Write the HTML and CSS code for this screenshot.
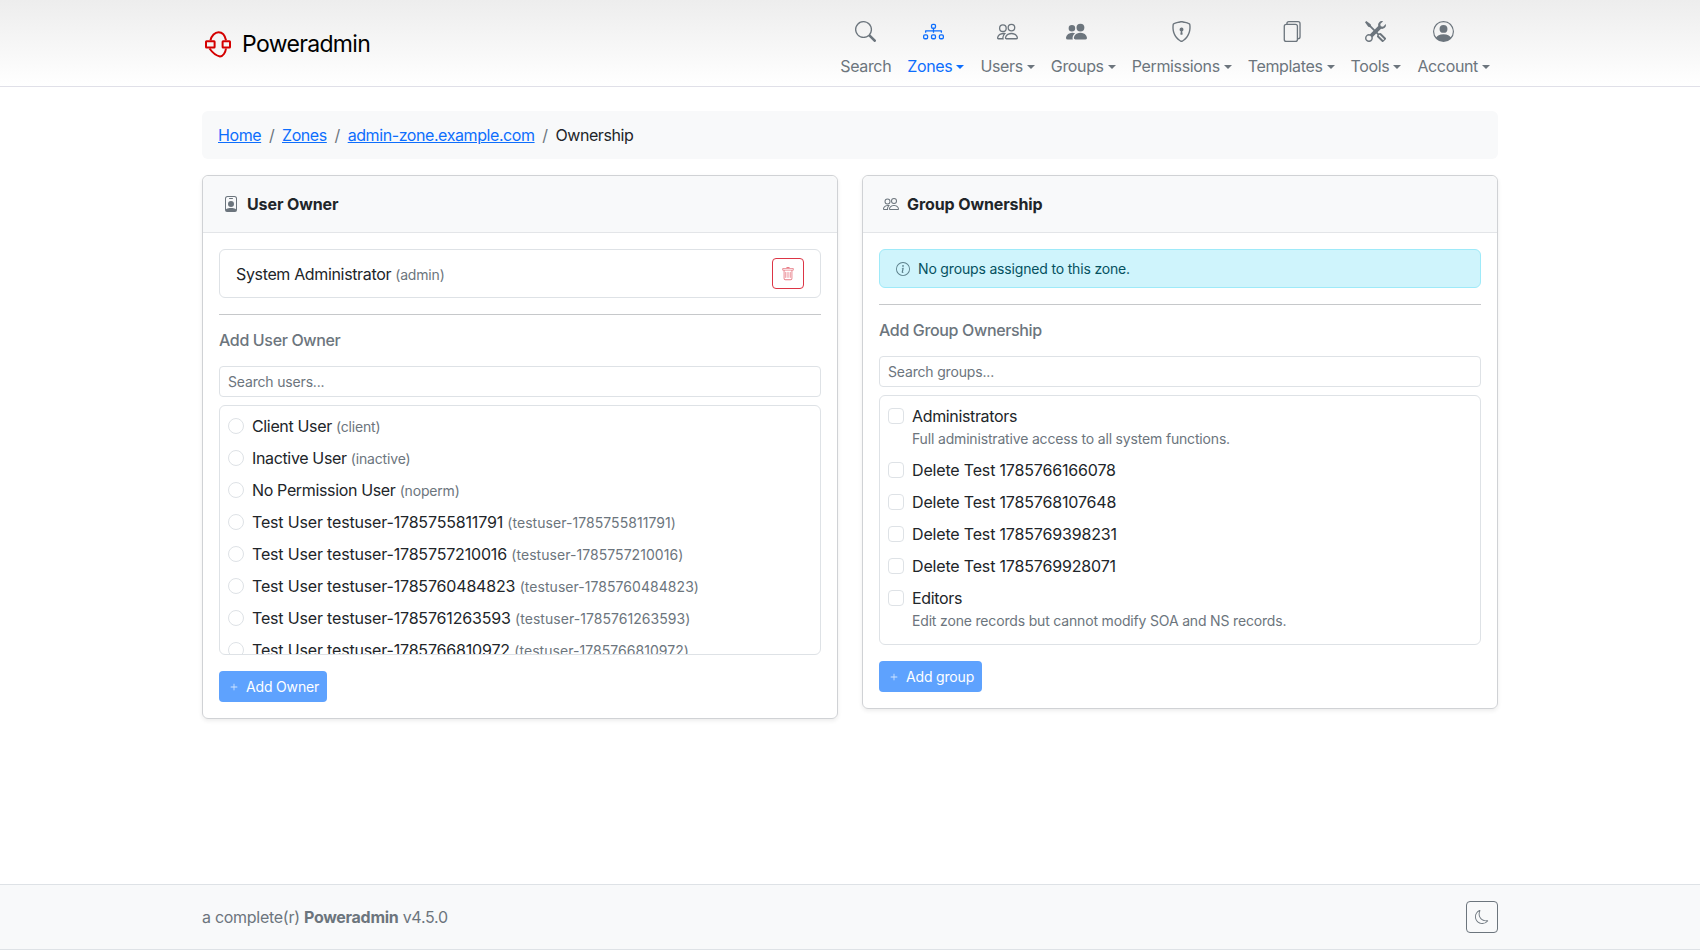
FILE: index.html
```html
<!DOCTYPE html>
<html lang="en">
  <head>
    <meta charset="UTF-8" />
    <meta name="viewport" content="width=device-width, initial-scale=1.0" />
    <title>Poweradmin - Ownership</title>
    <link rel="stylesheet" href="styles.css">
  </head>
  <body>
    <header class="topbar">
      <div class="container topbar-inner">
        <a href="#" class="brand">
          <svg class="brand-logo" viewBox="0 0 26 27" fill="none" stroke="#d40000" stroke-width="2">
            <rect x="1" y="10.3" width="8.6" height="6.200" rx="0.5" />
            <rect x="17.600" y="10.3" width="7.400" height="6.200" rx="0.5" />
            <path d="M5.500 9.300C6.500 4.500 10 1.200 13.500 1.200c3.500 0 6.500 3 7.500 8.100" />
            <path d="M4.500 17.500c2.500 3.500 6 7 10.500 8 3 0 5.500-4 6-8" />
          </svg>
          <span>Poweradmin</span>
        </a>
        <nav class="mainnav">
          <a href="#" class="nav-item">
            <svg class="nav-icon" viewBox="0 0 16 16" fill="currentColor"><path d="M11.742 10.344a6.5 6.5 0 1 0-1.397 1.398h-.001c.03.04.062.078.098.115l3.85 3.85a1 1 0 0 0 1.415-1.414l-3.85-3.85a1.007 1.007 0 0 0-.115-.1zM12 6.5a5.5 5.5 0 1 1-11 0 5.5 5.5 0 0 1 11 0z"/></svg>
            <span>Search</span>
          </a>
          <a href="#" class="nav-item active">
            <svg class="nav-icon icon-zones" viewBox="0 0 16 16" fill="currentColor"><path fill-rule="evenodd" d="M6 3.5A1.5 1.5 0 0 1 7.5 2h1A1.5 1.5 0 0 1 10 3.5v1A1.5 1.5 0 0 1 8.5 6v1H14a.5.5 0 0 1 .5.5v1a.5.5 0 0 1-1 0V8h-5v.5a.5.5 0 0 1-1 0V8h-5v.5a.5.5 0 0 1-1 0v-1A.5.5 0 0 1 2 7h5.5V6A1.5 1.5 0 0 1 6 4.5v-1zM8.5 5a.5.5 0 0 0 .5-.5v-1a.5.5 0 0 0-.5-.5h-1a.5.5 0 0 0-.5.5v1a.5.5 0 0 0 .5.5h1zM0 11.5A1.5 1.5 0 0 1 1.5 10h1A1.5 1.5 0 0 1 4 11.5v1A1.5 1.5 0 0 1 2.5 14h-1A1.5 1.5 0 0 1 0 12.5v-1zm1.5-.5a.5.5 0 0 0-.5.5v1a.5.5 0 0 0 .5.5h1a.5.5 0 0 0 .5-.5v-1a.5.5 0 0 0-.5-.5h-1zm4.5.5A1.5 1.5 0 0 1 7.5 10h1a1.5 1.5 0 0 1 1.5 1.5v1A1.5 1.5 0 0 1 8.5 14h-1A1.5 1.5 0 0 1 6 12.5v-1zm1.5-.5a.5.5 0 0 0-.5.5v1a.5.5 0 0 0 .5.5h1a.5.5 0 0 0 .5-.5v-1a.5.5 0 0 0-.5-.5h-1zm4.5.5a1.5 1.5 0 0 1 1.5-1.5h1a1.5 1.5 0 0 1 1.5 1.5v1a1.5 1.5 0 0 1-1.5 1.5h-1a1.5 1.5 0 0 1-1.5-1.5v-1zm1.5-.5a.5.5 0 0 0-.5.5v1a.5.5 0 0 0 .5.5h1a.5.5 0 0 0 .5-.5v-1a.5.5 0 0 0-.5-.5h-1z"/></svg>
            <span class="caret">Zones</span>
          </a>
          <a href="#" class="nav-item">
            <svg class="nav-icon" viewBox="0 0 16 16" fill="currentColor"><path d="M15 14s1 0 1-1-1-4-5-4-5 3-5 4 1 1 1 1h8Zm-7.978-1A.261.261 0 0 1 7 12.996c.001-.264.167-1.03.76-1.72C8.312 10.629 9.282 10 11 10c1.717 0 2.687.63 3.24 1.276.593.69.758 1.457.76 1.72l-.008.002a.274.274 0 0 1-.014.002H7.022ZM11 7a2 2 0 1 0 0-4 2 2 0 0 0 0 4Zm3-2a3 3 0 1 1-6 0 3 3 0 0 1 6 0ZM6.936 9.28a5.88 5.88 0 0 0-1.23-.247A7.35 7.35 0 0 0 5 9c-4 0-5 3-5 4 0 .667.333 1 1 1h4.216A2.238 2.238 0 0 1 5 13c0-1.01.377-2.042 1.09-2.904.243-.294.526-.569.846-.816ZM4.92 10A5.493 5.493 0 0 0 4 13H1c0-.26.164-1.03.76-1.724.545-.636 1.492-1.256 3.16-1.275ZM1.5 5.5a3 3 0 1 1 6 0 3 3 0 0 1-6 0Zm3-2a2 2 0 1 0 0 4 2 2 0 0 0 0-4Z"/></svg>
            <span class="caret">Users</span>
          </a>
          <a href="#" class="nav-item">
            <svg class="nav-icon icon-groups" viewBox="0 0 16 16" fill="currentColor"><path d="M7 14s-1 0-1-1 1-4 5-4 5 3 5 4-1 1-1 1H7Zm4-6a3 3 0 1 0 0-6 3 3 0 0 0 0 6Zm-5.784 6A2.238 2.238 0 0 1 5 13c0-1.355.68-2.75 1.936-3.72A6.325 6.325 0 0 0 5 9c-4 0-5 3-5 4s1 1 1 1h4.216ZM4.5 8a2.5 2.5 0 1 0 0-5 2.5 2.5 0 0 0 0 5Z"/></svg>
            <span class="caret">Groups</span>
          </a>
          <a href="#" class="nav-item">
            <svg class="nav-icon" viewBox="0 0 16 16" fill="currentColor"><path d="M5.338 1.59a61.44 61.44 0 0 0-2.837.856.481.481 0 0 0-.328.39c-.554 4.157.726 7.19 2.253 9.188a10.725 10.725 0 0 0 2.287 2.233c.346.244.652.42.893.533.12.057.218.095.293.118a.55.55 0 0 0 .101.025.615.615 0 0 0 .1-.025c.076-.023.174-.061.294-.118.24-.113.547-.29.893-.533a10.726 10.726 0 0 0 2.287-2.233c1.527-1.997 2.807-5.031 2.253-9.188a.48.48 0 0 0-.328-.39c-.651-.213-1.75-.56-2.837-.855C9.552 1.29 8.531 1.067 8 1.067c-.53 0-1.552.223-2.662.524zM5.072.56C6.157.265 7.31 0 8 0s1.843.265 2.928.56c1.11.3 2.229.655 2.887.87a1.54 1.54 0 0 1 1.044 1.262c.596 4.477-.787 7.795-2.465 9.99a11.775 11.775 0 0 1-2.517 2.453 7.159 7.159 0 0 1-1.048.625c-.28.132-.581.24-.829.24s-.548-.108-.829-.24a7.158 7.158 0 0 1-1.048-.625 11.777 11.777 0 0 1-2.517-2.453C1.928 10.487.545 7.169 1.141 2.692A1.54 1.54 0 0 1 2.185 1.43 62.456 62.456 0 0 1 5.072.56z"/><path d="M9.5 6.5a1.5 1.5 0 0 1-1 1.415l.385 1.99a.5.5 0 0 1-.491.595h-.788a.5.5 0 0 1-.49-.595l.384-1.99a1.5 1.5 0 1 1 2-1.415z"/></svg>
            <span class="caret">Permissions</span>
          </a>
          <a href="#" class="nav-item">
            <svg class="nav-icon" viewBox="0 0 16 16" fill="currentColor"><path d="M13 0H6a2 2 0 0 0-2 2 2 2 0 0 0-2 2v10a2 2 0 0 0 2 2h7a2 2 0 0 0 2-2 2 2 0 0 0 2-2V2a2 2 0 0 0-2-2zm0 13V4a2 2 0 0 0-2-2H5a1 1 0 0 1 1-1h7a1 1 0 0 1 1 1v10a1 1 0 0 1-1 1zM3 4a1 1 0 0 1 1-1h7a1 1 0 0 1 1 1v10a1 1 0 0 1-1 1H4a1 1 0 0 1-1-1V4z"/></svg>
            <span class="caret">Templates</span>
          </a>
          <a href="#" class="nav-item">
            <svg class="nav-icon" viewBox="0 0 16 16" fill="currentColor"><path d="M1 0 0 1l2.2 3.081a1 1 0 0 0 .815.419h.07a1 1 0 0 1 .708.293l2.675 2.675-2.617 2.654A3.003 3.003 0 0 0 0 13a3 3 0 1 0 5.878-.851l2.654-2.617.968.968-.305.914a1 1 0 0 0 .242 1.023l3.27 3.27a.997.997 0 0 0 1.414 0l1.586-1.586a.997.997 0 0 0 0-1.414l-3.27-3.27a1 1 0 0 0-1.023-.242L10.5 9.5l-.96-.96 2.68-2.643A3.005 3.005 0 0 0 16 3c0-.269-.035-.53-.102-.777l-2.14 2.141L12 4l-.364-1.757L13.777.102a3 3 0 0 0-3.675 3.68L7.462 6.46 4.793 3.793a1 1 0 0 1-.293-.707v-.071a1 1 0 0 0-.419-.814L1 0Zm9.646 10.646a.5.5 0 0 1 .708 0l2.914 2.915a.5.5 0 0 1-.707.707l-2.915-2.914a.5.5 0 0 1 0-.708ZM3 11l.471.242.529.026.287.445.445.287.026.529L5 13l-.242.471-.026.529-.445.287-.287.445-.529.026L3 15l-.471-.242L2 14.732l-.287-.445L1.268 14l-.026-.529L1 13l.242-.471.026-.529.445-.287.287-.445.529-.026L3 11Z"/></svg>
            <span class="caret">Tools</span>
          </a>
          <a href="#" class="nav-item">
            <svg class="nav-icon icon-account" viewBox="0 0 16 16" fill="currentColor"><path d="M11 6a3 3 0 1 1-6 0 3 3 0 0 1 6 0z"/><path fill-rule="evenodd" d="M0 8a8 8 0 1 1 16 0A8 8 0 0 1 0 8zm8-7a7 7 0 0 0-5.468 11.37C3.242 11.226 4.805 10 8 10s4.757 1.225 5.468 2.37A7 7 0 0 0 8 1z"/></svg>
            <span class="caret">Account</span>
          </a>
        </nav>
      </div>
    </header>

    <main class="container content">
      <ol class="breadcrumb">
        <li><a href="#">Home</a></li>
        <li><a href="#">Zones</a></li>
        <li><a href="#">admin-zone.example.com</a></li>
        <li class="current">Ownership</li>
      </ol>

      <div class="columns">
        <section class="card">
          <div class="card-header">
            <svg class="card-icon" viewBox="0 0 16 16" fill="currentColor"><path d="M6.5 2a.5.5 0 0 0 0 1h3a.5.5 0 0 0 0-1h-3zM11 8a3 3 0 1 1-6 0 3 3 0 0 1 6 0z"/><path d="M4.5 0A2.5 2.5 0 0 0 2 2.5V14a2 2 0 0 0 2 2h8a2 2 0 0 0 2-2V2.5A2.5 2.5 0 0 0 11.5 0h-7zM3 2.5A1.5 1.5 0 0 1 4.5 1h7A1.5 1.5 0 0 1 13 2.5v10.795a4.2 4.2 0 0 0-.776-.492C11.392 12.387 10.063 12 8 12s-3.392.387-4.224.803a4.2 4.2 0 0 0-.776.492V2.5z"/></svg>
            <h2>User Owner</h2>
          </div>
          <div class="card-body">
            <div class="owner-row">
              <div>System Administrator <small>(admin)</small></div>
              <button class="btn-delete" type="button">
                <svg viewBox="0 0 16 16" fill="currentColor"><path d="M5.5 5.5A.5.5 0 0 1 6 6v6a.5.5 0 0 1-1 0V6a.5.5 0 0 1 .5-.5zm2.5 0a.5.5 0 0 1 .5.5v6a.5.5 0 0 1-1 0V6a.5.5 0 0 1 .5-.5zm3 .5a.5.5 0 0 0-1 0v6a.5.5 0 0 0 1 0V6z"/><path fill-rule="evenodd" d="M14.5 3a1 1 0 0 1-1 1H13v9a2 2 0 0 1-2 2H5a2 2 0 0 1-2-2V4h-.5a1 1 0 0 1-1-1V2a1 1 0 0 1 1-1H6a1 1 0 0 1 1-1h2a1 1 0 0 1 1 1h3.500a1 1 0 0 1 1 1v1zM4.118 4 4 4.059V13a1 1 0 0 0 1 1h6a1 1 0 0 0 1-1V4.059L11.882 4H4.118zM2.500 3V2h11v1h-11z"/></svg>
              </button>
            </div>
            <hr />
            <h3>Add User Owner</h3>
            <input class="search" type="text" placeholder="Search users..." />
            <div class="pick-list">
              <label class="pick"><input type="radio" name="owner" /><span>Client User <small>(client)</small></span></label>
              <label class="pick"><input type="radio" name="owner" /><span>Inactive User <small>(inactive)</small></span></label>
              <label class="pick"><input type="radio" name="owner" /><span>No Permission User <small>(noperm)</small></span></label>
              <label class="pick"><input type="radio" name="owner" /><span class="numbered">Test User testuser-1785755811791 <small>(testuser-1785755811791)</small></span></label>
              <label class="pick"><input type="radio" name="owner" /><span class="numbered">Test User testuser-1785757210016 <small>(testuser-1785757210016)</small></span></label>
              <label class="pick"><input type="radio" name="owner" /><span class="numbered">Test User testuser-1785760484823 <small>(testuser-1785760484823)</small></span></label>
              <label class="pick"><input type="radio" name="owner" /><span class="numbered">Test User testuser-1785761263593 <small>(testuser-1785761263593)</small></span></label>
              <label class="pick"><input type="radio" name="owner" /><span class="numbered">Test User testuser-1785766810972 <small>(testuser-1785766810972)</small></span></label>
            </div>
            <button class="btn-add" type="button">
              <svg viewBox="0 0 16 16" fill="currentColor"><path d="M8 4a.5.5 0 0 1 .5.5v3h3a.5.5 0 0 1 0 1h-3v3a.5.5 0 0 1-1 0v-3h-3a.5.5 0 0 1 0-1h3v-3A.5.5 0 0 1 8 4z"/></svg>
              Add Owner
            </button>
          </div>
        </section>

        <section class="card">
          <div class="card-header">
            <svg class="card-icon" viewBox="0 0 16 16" fill="currentColor"><path d="M15 14s1 0 1-1-1-4-5-4-5 3-5 4 1 1 1 1h8Zm-7.978-1A.261.261 0 0 1 7 12.996c.001-.264.167-1.03.76-1.72C8.312 10.629 9.282 10 11 10c1.717 0 2.687.63 3.24 1.276.593.69.758 1.457.76 1.72l-.008.002a.274.274 0 0 1-.014.002H7.022ZM11 7a2 2 0 1 0 0-4 2 2 0 0 0 0 4Zm3-2a3 3 0 1 1-6 0 3 3 0 0 1 6 0ZM6.936 9.28a5.88 5.88 0 0 0-1.23-.247A7.35 7.35 0 0 0 5 9c-4 0-5 3-5 4 0 .667.333 1 1 1h4.216A2.238 2.238 0 0 1 5 13c0-1.01.377-2.042 1.09-2.904.243-.294.526-.569.846-.816ZM4.92 10A5.493 5.493 0 0 0 4 13H1c0-.26.164-1.03.76-1.724.545-.636 1.492-1.256 3.16-1.275ZM1.5 5.5a3 3 0 1 1 6 0 3 3 0 0 1-6 0Zm3-2a2 2 0 1 0 0 4 2 2 0 0 0 0-4Z"/></svg>
            <h2>Group Ownership</h2>
          </div>
          <div class="card-body">
            <div class="alert-info">
              <svg viewBox="0 0 16 16" fill="currentColor"><path d="M8 15A7 7 0 1 1 8 1a7 7 0 0 1 0 14zm0 1A8 8 0 1 0 8 0a8 8 0 0 0 0 16z"/><path d="m8.93 6.588-2.29.287-.082.38.45.083c.294.07.352.176.288.469l-.738 3.468c-.194.897.105 1.319.808 1.319.545 0 1.178-.252 1.465-.598l.088-.416c-.2.176-.492.246-.686.246-.275 0-.375-.193-.304-.533L8.93 6.588zM9 4.5a1 1 0 1 1-2 0 1 1 0 0 1 2 0z"/></svg>
              No groups assigned to this zone.
            </div>
            <hr />
            <h3>Add Group Ownership</h3>
            <input class="search" type="text" placeholder="Search groups..." />
            <div class="pick-list">
              <label class="pick"><input type="checkbox" /><span>Administrators<small class="desc">Full administrative access to all system functions.</small></span></label>
              <label class="pick"><input type="checkbox" /><span class="numbered">Delete Test 1785766166078</span></label>
              <label class="pick"><input type="checkbox" /><span class="numbered">Delete Test 1785768107648</span></label>
              <label class="pick"><input type="checkbox" /><span class="numbered">Delete Test 1785769398231</span></label>
              <label class="pick"><input type="checkbox" /><span class="numbered">Delete Test 1785769928071</span></label>
              <label class="pick"><input type="checkbox" /><span>Editors<small class="desc">Edit zone records but cannot modify SOA and NS records.</small></span></label>
            </div>
            <button class="btn-add" type="button">
              <svg viewBox="0 0 16 16" fill="currentColor"><path d="M8 4a.5.5 0 0 1 .5.5v3h3a.5.5 0 0 1 0 1h-3v3a.5.5 0 0 1-1 0v-3h-3a.5.5 0 0 1 0-1h3v-3A.5.5 0 0 1 8 4z"/></svg>
              Add group
            </button>
          </div>
        </section>
      </div>
    </main>

    <footer class="footer">
      <div class="container footer-inner">
        <span>a complete(r) <strong>Poweradmin</strong> v4.5.0</span>
        <button class="btn-theme" type="button">
          <svg viewBox="0 0 16 16" fill="currentColor"><path d="M6 .278a.768.768 0 0 1 .08.858 7.208 7.208 0 0 0-.878 3.46c0 4.021 3.278 7.277 7.318 7.277.527 0 1.04-.055 1.533-.16a.787.787 0 0 1 .81.316.733.733 0 0 1-.031.893A8.349 8.349 0 0 1 8.344 16C3.734 16 0 12.286 0 7.71 0 4.266 2.114 1.312 5.124.06A.752.752 0 0 1 6 .278zM4.858 1.311A7.269 7.269 0 0 0 1.025 7.71c0 4.02 3.279 7.276 7.319 7.276a7.316 7.316 0 0 0 5.205-2.162c-.337.042-.68.063-1.029.063-4.61 0-8.343-3.714-8.343-8.29 0-1.167.242-2.278.681-3.286z"/></svg>
        </button>
      </div>
    </footer>
  </body>
</html>
```

FILE: styles.css
```css
* {
  box-sizing: border-box;
}
body {
  font-family: Inter, "Liberation Sans", sans-serif;
  font-size: 16px;
  line-height: 24px;
  letter-spacing: -0.35px;
  color: #212529;
  background-color: #fff;
  margin: 0;
  display: flex;
  flex-direction: column;
  height: 100vh;
}
a {
  text-decoration: none;
}
.container {
  width: 1320px;
  margin: 0 auto;
  padding: 0 12px;
}

/* top bar */
.topbar {
  height: 87px;
  background: linear-gradient(#ededed, #fff);
  border-bottom: 1px solid #e0e0e8;
}
.topbar-inner {
  height: 100%;
  display: flex;
  align-items: center;
  justify-content: space-between;
}
.brand {
  display: flex;
  align-items: center;
  gap: 11px;
  margin-left: 3px;
  padding-top: 2px;
  color: #000;
  font-size: 23px;
  letter-spacing: -0.65px;
}
.brand-logo {
  width: 26px;
  height: 27px;
}
.mainnav {
  display: flex;
  padding-top: 12px;
}
.nav-item {
  display: flex;
  flex-direction: column;
  align-items: center;
  gap: 12px;
  padding: 0 8px;
  color: #6c757d;
}
.nav-item.active {
  color: #0d6efd;
}
.nav-icon {
  width: 21px;
  height: 21px;
}
.icon-zones {
  margin-right: 4px;
}
.icon-groups {
  margin-right: 13px;
}
.icon-account {
  margin-right: 20px;
}
.caret::after {
  content: "";
  display: inline-block;
  margin-left: 4px;
  vertical-align: 3px;
  border-top: 4.8px solid;
  border-left: 4.8px solid transparent;
  border-right: 4.8px solid transparent;
}

/* breadcrumb */
.content {
  padding-top: 24px;
}
.breadcrumb {
  display: flex;
  list-style: none;
  margin: 0 0 16px;
  padding: 12px 16px;
  background: #f8f9fa;
  border-radius: 6px;
  letter-spacing: -0.42px;
}
.breadcrumb a {
  color: #0d6efd;
  text-decoration: underline;
}
.breadcrumb li + li::before {
  content: "/";
  color: #6c757d;
  padding: 0 7.75px;
}

/* cards */
.columns {
  display: grid;
  grid-template-columns: 1fr 1fr;
  gap: 24px;
  align-items: start;
}
.card {
  border: 1px solid #d0d2d5;
  border-radius: 6px;
  box-shadow: 0 2px 4px rgba(0, 0, 0, 0.075);
}
.card-header {
  display: flex;
  align-items: center;
  gap: 8px;
  padding: 16px 20px;
  background: #f8f9fa;
  border-bottom: 1px solid #e3e5e8;
  border-radius: 6px 6px 0 0;
}
.card-header h2 {
  margin: 0;
  font-size: 16px;
  line-height: 24px;
  font-weight: 700;
  letter-spacing: -0.1px;
}
.card-icon {
  width: 16px;
  height: 16px;
  color: #6c757d;
}
.card-body {
  padding: 16px;
}
small {
  font-size: 14px;
  line-height: 1;
  letter-spacing: -0.17px;
  color: #6c757d;
}
.owner-row {
  display: flex;
  align-items: center;
  justify-content: space-between;
  padding: 8px 16px;
  border: 1px solid #dee2e6;
  border-radius: 6px;
}
.btn-delete {
  width: 32px;
  height: 31px;
  padding: 0;
  display: flex;
  align-items: center;
  justify-content: center;
  background: #fff;
  color: #dc3545;
  border: 1px solid #dc3545;
  border-radius: 4px;
}
.btn-delete svg {
  width: 14px;
  height: 14px;
  opacity: 0.65;
}
hr {
  margin: 16px 0;
  border: 0;
  border-top: 1px solid #c6c8ca;
}
h3 {
  margin: 0 0 16px;
  font-size: 16px;
  line-height: 19px;
  font-weight: 500;
  color: #6c757d;
}
.search {
  display: block;
  width: 100%;
  height: 31px;
  margin-bottom: 8px;
  padding: 4px 8px;
  font: inherit;
  font-size: 14px;
  letter-spacing: -0.17px;
  border: 1px solid #dee2e6;
  border-radius: 4px;
}
.search::placeholder {
  color: #6c757d;
}
.alert-info {
  display: flex;
  align-items: center;
  gap: 8px;
  padding: 8px 16px;
  font-size: 14px;
  line-height: 21px;
  letter-spacing: -0.17px;
  color: #055160;
  background: #cff4fc;
  border: 1px solid #9eeaf9;
  border-radius: 6px;
}
.alert-info svg {
  width: 14px;
  height: 14px;
  color: #5b7f8a;
}

/* radio and checkbox lists */
.pick-list {
  height: 250px;
  margin-bottom: 16px;
  padding: 8px;
  overflow: hidden;
  border: 1px solid #dee2e6;
  border-radius: 6px;
}
.pick {
  display: flex;
  gap: 8px;
  margin-bottom: 8px;
}
.pick input {
  appearance: none;
  flex: none;
  width: 16px;
  height: 16px;
  margin: 4px 0 0 0;
  background: #fff;
  border: 1px solid #dee2e6;
  border-radius: 4px;
}
.pick input[type="radio"] {
  border-radius: 50%;
}
.numbered {
  letter-spacing: -0.17px;
}
.numbered small {
  letter-spacing: 0.05px;
}
.desc {
  display: block;
  line-height: 21px;
  padding-bottom: 1px;
}
.btn-add {
  display: flex;
  align-items: center;
  gap: 5px;
  height: 31px;
  padding: 0 8px;
  font: inherit;
  font-size: 14px;
  letter-spacing: -0.17px;
  color: #fff;
  background: #5ea2fe;
  border: 0;
  border-radius: 4px;
}
.btn-add svg {
  width: 14px;
  height: 14px;
  opacity: 0.7;
}

/* footer */
.footer {
  flex: none;
  margin-top: auto;
  height: 66px;
  color: #6c757d;
  background: #f8f9fa;
  border-top: 1px solid #dee2e6;
  border-bottom: 1px solid #dee2e6;
  letter-spacing: -0.28px;
}
.footer-inner {
  height: 100%;
  display: flex;
  align-items: center;
  justify-content: space-between;
}
.btn-theme {
  width: 32px;
  height: 32px;
  padding: 0;
  display: flex;
  align-items: center;
  justify-content: center;
  color: #6c757d;
  background: transparent;
  border: 1px solid #6c757d;
  border-radius: 4px;
}
.btn-theme svg {
  width: 14px;
  height: 14px;
}
```
